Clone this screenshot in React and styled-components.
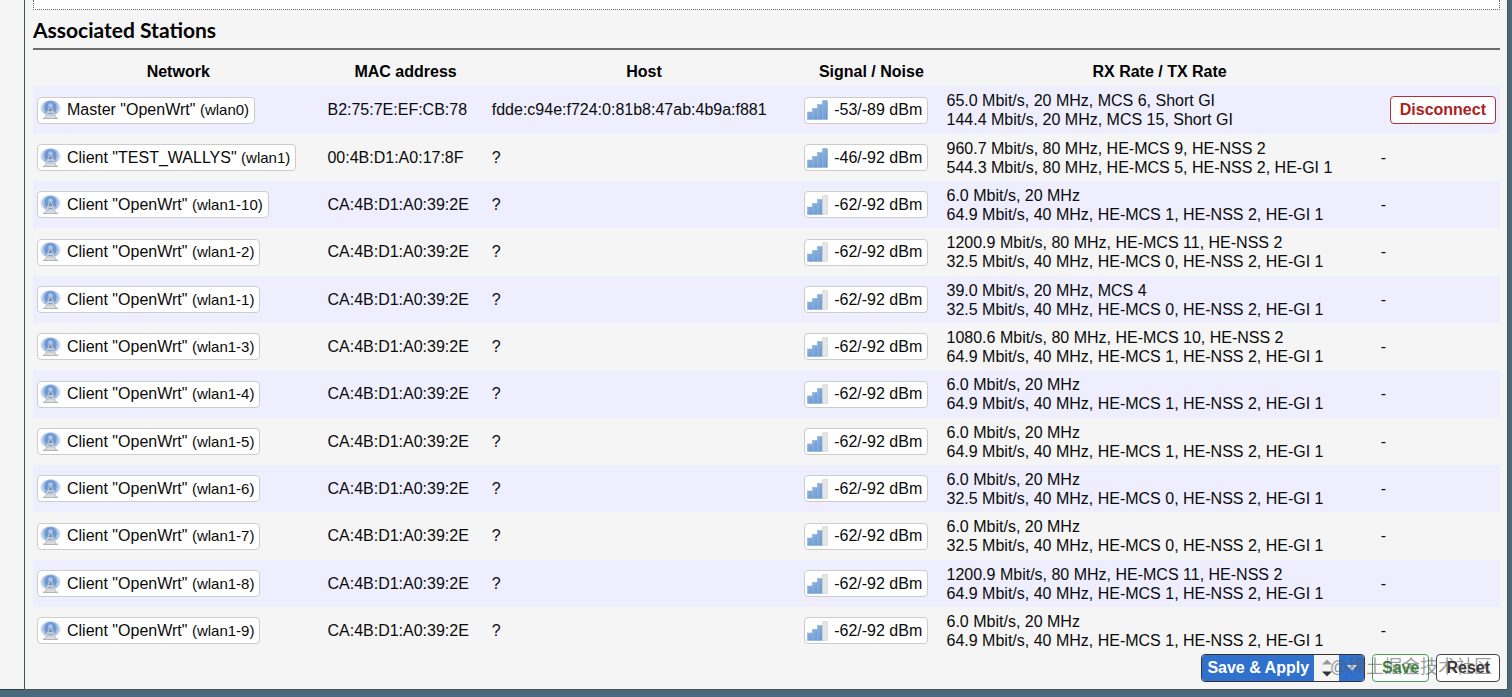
import React from "react";
import styled, { createGlobalStyle, css } from "styled-components";

const GlobalStyle = createGlobalStyle`
  * { box-sizing: border-box; }
  body {
    margin: 0;
    background: #4a697b;
    color: #0a0a0a;
    font-family: "Liberation Sans", Arial, sans-serif;
    font-size: 16px;
    line-height: 20px;
  }
`;

const Page = styled.div`
  display: flex;
  margin-right: 4px;
  padding-bottom: 7px;
  position: relative;
`;

const Gutter = styled.div`
  flex: 0 0 24px;
  background: #f5f5f5;
  border-bottom: 1px solid #24404c;
`;

const Main = styled.main`
  flex: 1;
  min-width: 0;
  padding: 0 7px 7px 8px;
  background: #f5f5f5;
  border: 1px solid #4a5356;
  border-top: 0;
`;

const PreviousPanel = styled.div`
  height: 10px;
  background: #fff;
  border: 1px dotted #666;
  border-top: 0;
`;

const Title = styled.h3`
  margin: 0 0 12px;
  padding: 6px 0 5px;
  border-bottom: 2px solid #6b6b6b;
  color: #000;
  font: 700 21px/27px Lato, sans-serif;
`;

const Table = styled.table`
  width: 100%;
  table-layout: fixed;
  border-collapse: collapse;
`;

const Col = styled.col`
  width: ${(p) => p.$share}%;
`;

const HeadCell = styled.th`
  padding: 0 4px 4px;
  color: #000;
  font-weight: bold;
`;

const Row = styled.tr`
  height: 47px;
  &:nth-child(3n + 1) { height: 48px; }
  &:nth-child(odd) { background: #eeeeff; }
`;

const Cell = styled.td`
  padding: 0 4px;
  white-space: nowrap;
  text-align: ${(p) => p.$align || "left"};
`;

const RateCell = styled(Cell)`
  line-height: 19px;
`;

const Badge = styled.span`
  display: inline-flex;
  align-items: center;
  gap: 6px;
  height: 27px;
  padding: 0 5px 0 2px;
  background: #fff;
  border: 1px solid #ccc;
  border-radius: 4px;
  vertical-align: middle;

  svg { flex: none; }
  small { font-size: 15px; }
`;

const Actions = styled.div`
  display: flex;
  justify-content: flex-end;
  gap: 7px;
`;

const tones = {
  red: css`color: #a22; border-color: #b03038;`,
  green: css`color: #3d8b40; border-color: #4c9a55;`,
  dark: css`color: #333; border-color: #444;`,
};

const Button = styled.button`
  height: 28px;
  padding: 0 9px;
  background: #fff;
  border: 1px solid;
  border-radius: 4px;
  font: bold 16px/20px "Liberation Sans", Arial, sans-serif;
  ${(p) => tones[p.$tone]}
`;

const Split = styled.div`
  display: flex;
  height: 28px;
  background: #f5f5f5;
  border: 1px solid #333;
  border-radius: 4px;
  overflow: hidden;
`;

const ApplyButton = styled.button`
  padding: 0 5px;
  border: 0;
  background: #3071cd;
  color: #fff;
  font: bold 16px/20px "Liberation Sans", Arial, sans-serif;
`;

const Sorter = styled.button`
  display: flex;
  align-items: center;
  justify-content: center;
  width: 25px;
  padding: 0;
  border: 0;
  background: #f5f5f5;
`;

const Dropper = styled(Sorter)`
  background: #3071cd;
`;

const Watermark = styled.div`
  position: absolute;
  right: 16px;
  bottom: 19px;
  color: rgba(90, 90, 90, 0.6);
  font: 18px/22px "Liberation Sans", "Noto Sans CJK SC", sans-serif;
  pointer-events: none;
`;

const WifiIcon = () => (
  <svg width="21" height="20" viewBox="0 0 21 20" aria-hidden="true">
    <ellipse cx="10.500" cy="8" rx="10.400" ry="7.800" fill="#dce6f5" />
    <ellipse cx="10.500" cy="8" rx="8.800" ry="7.500" fill="#9bb8e0" />
    <ellipse cx="10.500" cy="7.500" rx="6" ry="6.200" fill="#6f98d2" />
    <path d="M3.500 3.500Q1.500 8 4 12M17.500 3.500Q19.500 8 17 12" fill="none" stroke="#c3d4ed" />
    <path d="M10.500 6L5.500 17.500M10.500 6L15.500 17.500M8 12H13M7 15H14" fill="none" stroke="#c3cad4" strokeWidth="1.800" />
    <circle cx="10.500" cy="5.500" r="2.300" fill="#a9c5ed" />
    <path d="M8.500 11L10.500 7L12.500 11Z" fill="#6f8cb5" />
    <path d="M3 17.500H18V19H3Z" fill="#b2b4b6" />
    <path d="M7 15.800H14V17.500H7Z" fill="#dededc" />
  </svg>
);

const SignalIcon = ({ full }) => (
  <svg width="21" height="20" viewBox="0 0 21 20" aria-hidden="true">
    <defs>
      <linearGradient id="bars" x1="0" y1="0" x2="1" y2="1">
        <stop offset="0" stopColor="#8fb4df" />
        <stop offset="1" stopColor="#6897cf" />
      </linearGradient>
    </defs>
    <g fill="url(#bars)" stroke="#86acd9" strokeWidth="0.600">
      <rect x="0.500" y="12" width="5" height="7.500" />
      <rect x="5.500" y="8.500" width="5" height="11" />
      <rect x="10.500" y="4.500" width="5" height="15" />
    </g>
    <rect
      x="15.500" y="0.500" width="5" height="19" rx="0.500"
      fill={full ? "url(#bars)" : "#e5e5e5"}
      stroke={full ? "#86acd9" : "#cfcfcf"}
      strokeWidth="0.600"
    />
  </svg>
);

const UpDownIcon = () => (
  <svg width="10" height="18" viewBox="0 0 10 18" aria-hidden="true">
    <path d="M0 5.500L5 0.500L10 5.500Z" fill="#999" />
    <path d="M0 12.500L5 17.500L10 12.500Z" fill="#333" />
  </svg>
);

const CaretIcon = () => (
  <svg width="10" height="6" viewBox="0 0 10 6" aria-hidden="true">
    <path d="M0 0H10L5 6Z" fill="#dde8f8" />
  </svg>
);

const MAC = "CA:4B:D1:A0:39:2E";
const MCS0 = "32.5 Mbit/s, 40 MHz, HE-MCS 0, HE-NSS 2, HE-GI 1";
const MCS1 = "64.9 Mbit/s, 40 MHz, HE-MCS 1, HE-NSS 2, HE-GI 1";
const SLOW = "6.0 Mbit/s, 20 MHz";
const FAST = "1200.9 Mbit/s, 80 MHz, HE-MCS 11, HE-NSS 2";

const client = (ifname, rx, tx) => ({
  name: 'Client "OpenWrt"', ifname, mac: MAC, host: "?", signal: "-62/-92 dBm", rx, tx,
});

const stations = [
  {
    name: 'Master "OpenWrt"', ifname: "wlan0", mac: "B2:75:7E:EF:CB:78",
    host: "fdde:c94e:f724:0:81b8:47ab:4b9a:f881", signal: "-53/-89 dBm", full: true,
    rx: "65.0 Mbit/s, 20 MHz, MCS 6, Short GI", tx: "144.4 Mbit/s, 20 MHz, MCS 15, Short GI",
    removable: true,
  },
  {
    name: 'Client "TEST_WALLYS"', ifname: "wlan1", mac: "00:4B:D1:A0:17:8F",
    host: "?", signal: "-46/-92 dBm", full: true,
    rx: "960.7 Mbit/s, 80 MHz, HE-MCS 9, HE-NSS 2",
    tx: "544.3 Mbit/s, 80 MHz, HE-MCS 5, HE-NSS 2, HE-GI 1",
  },
  client("wlan1-10", SLOW, MCS1),
  client("wlan1-2", FAST, MCS0),
  client("wlan1-1", "39.0 Mbit/s, 20 MHz, MCS 4", MCS0),
  client("wlan1-3", "1080.6 Mbit/s, 80 MHz, HE-MCS 10, HE-NSS 2", MCS1),
  client("wlan1-4", SLOW, MCS1),
  client("wlan1-5", SLOW, MCS1),
  client("wlan1-6", SLOW, MCS0),
  client("wlan1-7", SLOW, MCS0),
  client("wlan1-8", FAST, MCS1),
  client("wlan1-9", SLOW, MCS1),
];

const columns = [
  ["Network", 19.8],
  ["MAC address", 11.2],
  ["Host", 21.3],
  ["Signal / Noise", 9.7],
  ["RX Rate / TX Rate", 29.6],
  ["", 8.4],
];

export default function App() {
  return (
    <>
      <GlobalStyle />
      <Page>
        <Gutter />
        <Main>
          <PreviousPanel />
          <Title>Associated Stations</Title>
          <Table>
            <colgroup>
              {columns.map(([label, share]) => <Col key={label} $share={share} />)}
            </colgroup>
            <thead>
              <tr>
                {columns.map(([label]) => <HeadCell key={label} scope="col">{label}</HeadCell>)}
              </tr>
            </thead>
            <tbody>
              {stations.map((s) => (
                <Row key={s.ifname}>
                  <Cell>
                    <Badge>
                      <WifiIcon />
                      <span>{s.name} <small>({s.ifname})</small></span>
                    </Badge>
                  </Cell>
                  <Cell>{s.mac}</Cell>
                  <Cell>{s.host}</Cell>
                  <Cell>
                    <Badge>
                      <SignalIcon full={s.full} />
                      <span>{s.signal}</span>
                    </Badge>
                  </Cell>
                  <RateCell>{s.rx}<br />{s.tx}</RateCell>
                  <Cell $align={s.removable ? "right" : "left"}>
                    {s.removable ? <Button type="button" $tone="red">Disconnect</Button> : "-"}
                  </Cell>
                </Row>
              ))}
            </tbody>
          </Table>
          <Actions>
            <Split>
              <ApplyButton type="button">Save &amp; Apply</ApplyButton>
              <Sorter type="button" aria-label="Change order"><UpDownIcon /></Sorter>
              <Dropper type="button" aria-label="More apply options"><CaretIcon /></Dropper>
            </Split>
            <Button type="button" $tone="green">Save</Button>
            <Button type="button" $tone="dark">Reset</Button>
          </Actions>
        </Main>
        <Watermark>@稀土掘金技术社区</Watermark>
      </Page>
    </>
  );
}
